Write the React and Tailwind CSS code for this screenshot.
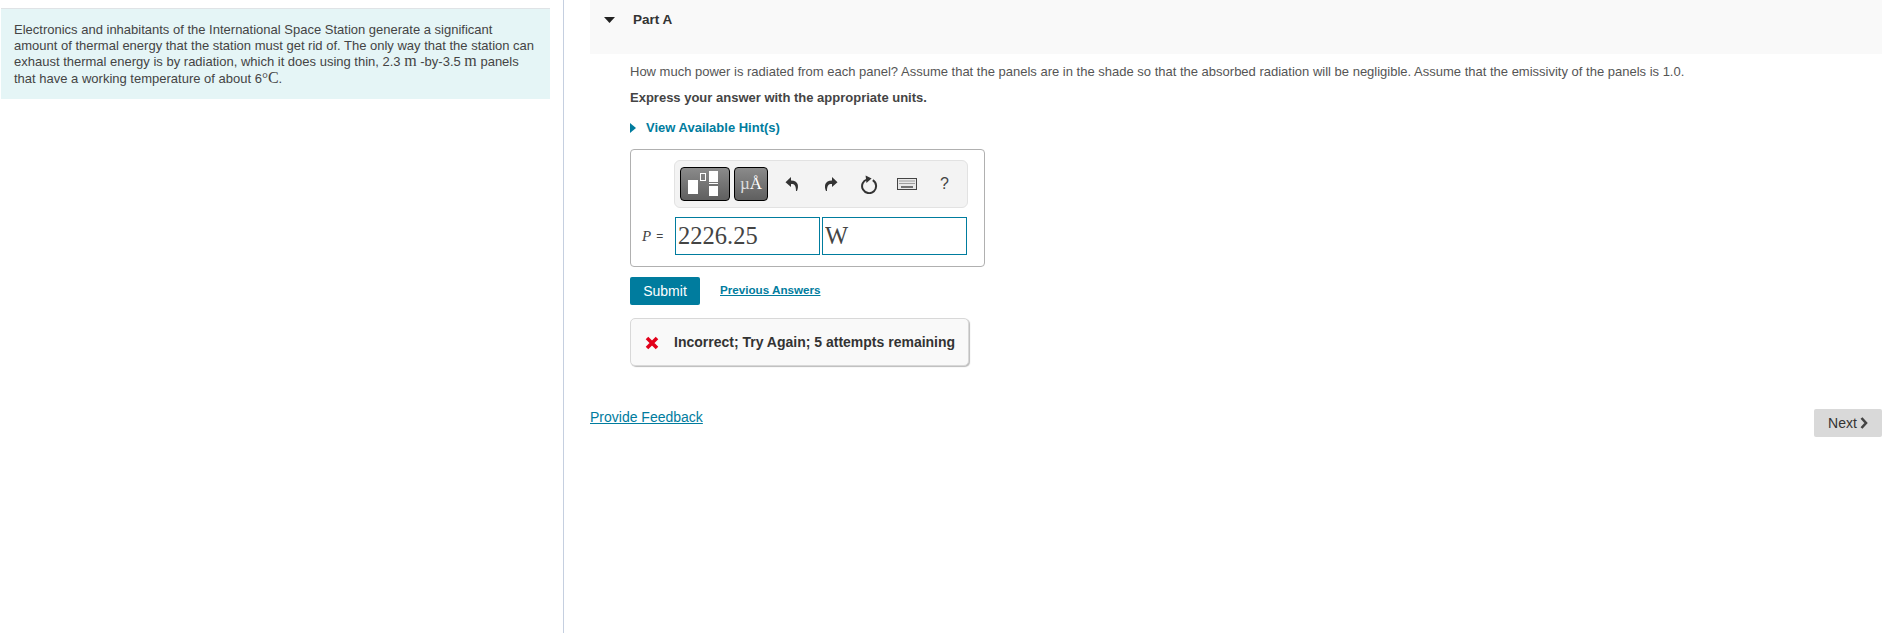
import { useState } from 'react';

const sans = { fontFamily: '"Liberation Sans", Arial, sans-serif' };

function UndoIcon({ flip }) {
  return (
    <svg width="14" height="16" viewBox="0 0 14 16" className={flip ? '-scale-x-100' : ''}>
      <path d="M6 1 L0.5 6.2 L6 11 L6 8 C9.4 7.8 11 9.6 11 15 L12 15 C14 10.4 13.6 4.4 6 4.4 Z" fill="#333" />
    </svg>
  );
}

function ResetIcon() {
  return (
    <svg width="18" height="19" viewBox="0 0 18 19">
      <path d="M7.2 4.4 A7 7 0 1 0 12.8 5.2" fill="none" stroke="#333" strokeWidth="2" />
      <path d="M5.6 0.4 L11.6 3.4 L6.4 8 Z" fill="#333" />
    </svg>
  );
}

function KeyboardIcon() {
  return (
    <svg width="20" height="12" viewBox="0 0 20 12">
      <rect x="0.5" y="0.5" width="19" height="11" fill="#e8e8e8" stroke="#444" />
      <path d="M2.5 3h15M2.5 5.5h15" stroke="#555" strokeDasharray="1 1" fill="none" />
      <path d="M4 9h12" stroke="#555" strokeWidth="1.6" fill="none" />
    </svg>
  );
}

function TemplateIcon() {
  return (
    <svg width="48" height="32" viewBox="0 0 48 32">
      <rect x="7" y="12" width="10" height="14" fill="#fff" />
      <rect x="19.5" y="5.5" width="5" height="7" fill="none" stroke="#fff" />
      <rect x="28" y="3" width="9" height="11" fill="#fff" />
      <rect x="28" y="15" width="9" height="1" fill="#fff" />
      <rect x="28" y="18" width="9" height="10" fill="#fff" />
    </svg>
  );
}

export default function App() {
  const [value, setValue] = useState('2226.25');
  const [unit, setUnit] = useState('W');

  return (
    <div className="flex h-[633px] w-[1884px] overflow-hidden bg-white text-[#333]" style={sans}>
      {/* Problem statement */}
      <div className="w-[564px] shrink-0 border-r border-[#c5cfe0] pt-2 pl-px">
        <div className="h-[91px] w-[549px] border-t border-[#dfe3e6] bg-[#e5f5f6] pl-[13px] pt-[13px] text-[13px] leading-[15.6px] text-[#444]">
          <p>
            Electronics and inhabitants of the International Space Station generate a significant<br />
            amount of thermal energy that the station must get rid of. The only way that the station can<br />
            exhaust thermal energy is by radiation, which it does using thin, 2.3 <span className="font-['Liberation_Serif'] text-[16px] leading-[15px]">m</span> -by-3.5 <span className="font-['Liberation_Serif'] text-[16px] leading-[15px]">m</span> panels<br />
            that have a working temperature of about 6<span className="font-['Liberation_Serif'] text-[15px] leading-[15px]">°</span><span className="font-['Liberation_Serif'] text-[16px] leading-[15px]">C</span>.
          </p>
        </div>
      </div>

      {/* Part A */}
      <div className="min-w-0 flex-1 pl-[26px] pr-[2px]">
        <div className="flex h-[54px] bg-[#f9f9f9] pl-[14px] pt-[13px]">
          <svg width="11" height="6" viewBox="0 0 11 6" className="mt-[4px]"><path d="M0 0h11L5.5 6z" fill="#222" /></svg>
          <span className="ml-[18px] text-[13.5px] font-bold leading-[14px] text-[#333]">Part A</span>
        </div>

        <div className="pl-[40px]">
          <p className="mt-[10px] text-[13px] leading-[16px] text-[#555]">
            How much power is radiated from each panel? Assume that the panels are in the shade so that the absorbed radiation will be negligible. Assume that the emissivity of the panels is 1.0.
          </p>
          <p className="mt-[10px] text-[13px] font-bold leading-[16px] text-[#444]">Express your answer with the appropriate units.</p>
          <div className="mt-[14px] flex items-center text-[13px] font-bold leading-[16px] text-[#007c9e]">
            <svg width="6" height="10" viewBox="0 0 6 10"><path d="M0 0l6 5-6 5z" fill="#007c9e" /></svg>
            <span className="ml-[10px]">View Available Hint(s)</span>
          </div>

          {/* Answer box */}
          <div className="mt-[13px] h-[118px] w-[355px] rounded-[4px] border border-[#b0b0b0] pl-[11px] pt-[10px]">
            <div className="ml-[32px] flex h-[48px] w-[294px] items-center rounded-[6px] border border-[#e2e2e2] bg-[#f3f3f3] pl-[5px]">
              <button className="flex h-[34px] w-[50px] items-center justify-center rounded-[4px] border border-black bg-gradient-to-b from-[#8b8b8b] to-[#5f5f5f]">
                <TemplateIcon />
              </button>
              <button className="ml-[4px] flex h-[34px] w-[34px] items-center justify-center rounded-[4px] border border-black bg-gradient-to-b from-[#8b8b8b] to-[#5f5f5f] font-['Liberation_Serif'] text-[17px] text-white">
                <span className="text-[#ddd]">µ</span>Å
              </button>
              <div className="ml-[17px] flex w-[14px] justify-center"><UndoIcon /></div>
              <div className="ml-[25px] flex w-[14px] justify-center"><UndoIcon flip /></div>
              <div className="ml-[22px] flex w-[18px] justify-center"><ResetIcon /></div>
              <div className="ml-[19px]"><KeyboardIcon /></div>
              <span className="ml-[23px] text-[16px] text-[#444]">?</span>
            </div>

            <div className="mt-[9px] flex items-center">
              <span className="flex w-[33px] items-center text-[12px] text-[#444]">
                <i className="mr-[5px] font-['Liberation_Serif'] text-[15px]">P</i>=
              </span>
              <input value={value} onChange={(e) => setValue(e.target.value)} className="h-[38px] w-[145px] border border-[#007c9e] px-[2px] font-['Liberation_Serif'] text-[24.5px] text-[#444] outline-none" />
              <input value={unit} onChange={(e) => setUnit(e.target.value)} className="ml-[2px] h-[38px] w-[145px] border border-[#007c9e] px-[2px] font-['Liberation_Serif'] text-[24.5px] text-[#444] outline-none" />
            </div>
          </div>

          <div className="mt-[10px] flex items-start">
            <button className="h-[28px] w-[70px] rounded-[2px] bg-[#007c9e] text-[14px] text-white">Submit</button>
            <a href="#" className="ml-[20px] mt-[5px] text-[11.65px] font-bold leading-[16px] text-[#007c9e] underline">Previous Answers</a>
          </div>

          <div className="mt-[13px] flex h-[48px] w-[339px] items-center rounded-[5px] border border-[#d8d8d8] bg-[#f9f9f9] pl-[14px] pt-px shadow-[1px_1px_1px_#bbb]">
            <svg width="14" height="14" viewBox="0 0 14 14"><path d="M2 2l10 10M12 2L2 12" stroke="#e2001a" strokeWidth="3.6" /></svg>
            <span className="ml-[15px] text-[14px] font-bold text-[#333]">Incorrect; Try Again; 5 attempts remaining</span>
          </div>
        </div>

        <div className="mt-[43px] flex items-start justify-between">
          <a href="#" className="text-[14px] leading-[16px] text-[#007c9e] underline">Provide Feedback</a>
          <button className="flex h-[28px] w-[68px] items-center justify-center rounded-[2px] bg-[#d9d9d9] text-[14px] text-[#333]">
            Next
            <svg width="8" height="12" viewBox="0 0 8 12" className="ml-[3px]"><path d="M1.5 1l4.5 5-4.5 5" fill="none" stroke="#444" strokeWidth="2.6" /></svg>
          </button>
        </div>
      </div>
    </div>
  );
}
